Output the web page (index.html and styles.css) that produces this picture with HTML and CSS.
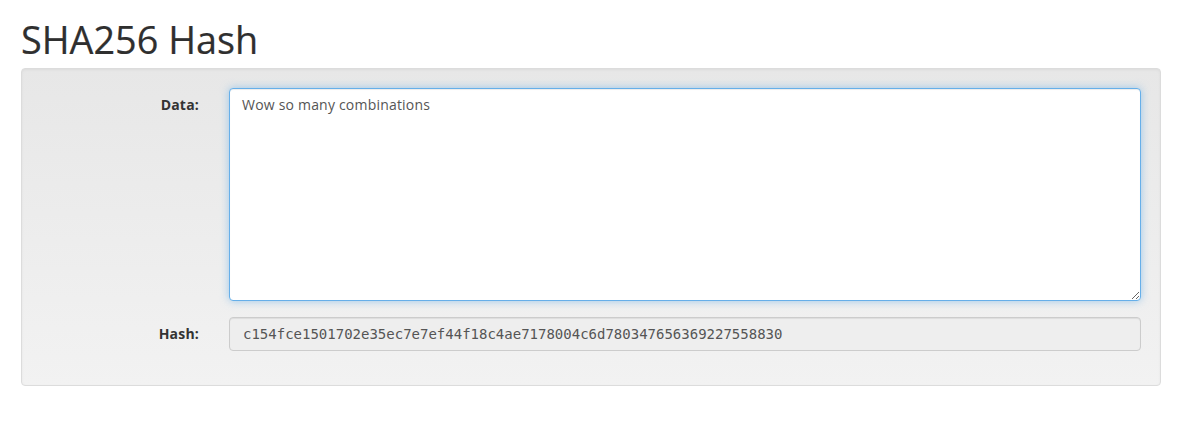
FILE: index.html
```html
<!DOCTYPE html>
<html>
<head>
<meta charset="utf-8">
<title>SHA256 Hash</title>
<link rel="stylesheet" href="styles.css">
</head>
<body>
<div class="page">
  <h1 class="title">SHA256 Hash</h1>
  <div class="well">
    <div class="form-row">
      <label class="form-label" for="data">Data:</label>
      <div class="form-field">
        <textarea id="data" class="control control-area is-focused">Wow so many combinations</textarea>
      </div>
    </div>
    <div class="form-row form-row-last">
      <label class="form-label" for="hash">Hash:</label>
      <div class="form-field">
        <input id="hash" class="control control-hash" readonly value="c154fce1501702e35ec7e7ef44f18c4ae7178004c6d780347656369227558830">
      </div>
    </div>
  </div>
</div>
</body>
</html>
```
FILE: styles.css
```css
* { box-sizing: border-box; }
html, body { margin: 0; padding: 0; background: #fff; }
body {
  font-family: "Open Sans", "Liberation Sans", sans-serif;
  font-size: 14px;
  line-height: 1.42857;
  color: #333;
}
.page {
  padding: 0 30px 0 21px;
}
.title {
  font-family: "Open Sans", "Liberation Sans", sans-serif;
  font-size: 37.8px;
  font-weight: 400;
  line-height: 1.1;
  margin: 0 0 7px 0;
  padding-top: 19px;
  color: #2f2f2f;
  -webkit-text-stroke: 0.2px #2f2f2f;
}
.well {
  border: 1px solid #dcdcdc;
  border-radius: 4px;
  background-image: linear-gradient(to bottom, #e7e7e7 0, #f2f2f2 100%);
  box-shadow: inset 0 1px 3px rgba(0,0,0,.05), 0 1px 0 rgba(255,255,255,.1);
  padding: 19px 19px 19px 19px;
}
.form-row {
  display: flex;
  margin-bottom: 16px;
}
.form-row-last {
  margin-bottom: 15px;
}
.form-label {
  width: 158px;
  flex: none;
  text-align: right;
  font-weight: 700;
  padding-top: 7px;
  color: #333;
  letter-spacing: 0.2px;
}
.form-field {
  flex: none;
  width: 912px;
  margin-left: 30px;
}
.control {
  display: block;
  width: 100%;
  padding: 6px 12px;
  font-size: 14px;
  line-height: 1.42857;
  color: #555;
  background: #fff;
  border: 1px solid #ccc;
  border-radius: 4px;
  box-shadow: inset 0 1px 1px rgba(0,0,0,.075);
  outline: none;
}
.control-area {
  height: 213px;
  font-family: "Open Sans", "Liberation Sans", sans-serif;
  letter-spacing: 0.2px;
  resize: vertical;
}
.is-focused {
  border-color: #66afe9;
  box-shadow: inset 0 1px 1px rgba(0,0,0,.075), 0 0 8px rgba(102,175,233,.6);
}
.control-hash {
  height: 34px;
  font-family: "DejaVu Sans Mono", "Liberation Mono", monospace;
  background: #eee;
  color: #555;
  padding-left: 13px;
}
```
